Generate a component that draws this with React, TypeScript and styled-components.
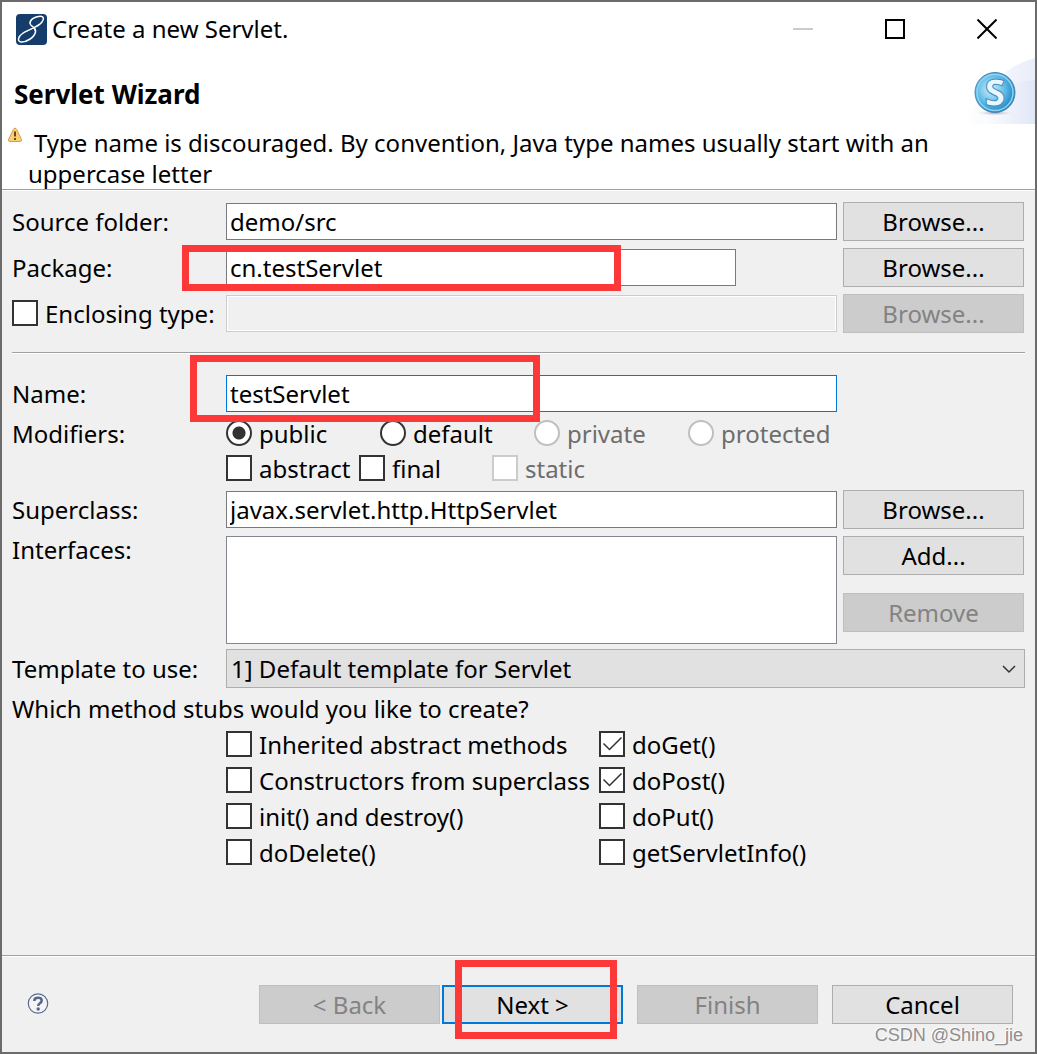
import React, { useState } from "react";
import styled, { createGlobalStyle, css } from "styled-components";

const GlobalStyle = createGlobalStyle`
  *, *::before, *::after { box-sizing: border-box; }
  body { margin: 0; background: #6b6b6b; }
  body, input, button, select, textarea {
    font-family: "Noto Sans", "Open Sans", sans-serif;
    font-size: 24px;
    line-height: 28px;
    color: #000;
  }
`;

const Window = styled.div`
  position: relative;
  display: flex;
  flex-direction: column;
  min-height: 100vh;
  border: 2px solid #6b6b6b;
  background: #f0f0f0;
`;

const TitleBar = styled.header`
  display: flex;
  align-items: center;
  height: 54px;
  padding: 0 2px 0 14px;
  background: #fff;
`;

const WindowTitle = styled.span`
  flex: 1;
  padding-left: 5px;
`;

const CaptionButton = styled.button`
  display: grid;
  place-items: center;
  width: 92px;
  height: 54px;
  padding: 0;
  border: 0;
  background: transparent;
`;

const Banner = styled.section`
  background: #fff;
  border-bottom: 1px solid #a0a0a0;
  box-shadow: 0 1px 0 #fff;
`;

const BannerTop = styled.div`
  display: flex;
  align-items: flex-start;
  justify-content: space-between;
  padding: 2px 0 0 12px;
`;

const Heading = styled.h1`
  margin: 0;
  padding-top: 22px;
  font-size: 26px;
  line-height: 28px;
  font-weight: 700;
`;

const BannerMessage = styled.div`
  display: flex;
  gap: 5px;
  padding: 3px 64px 0 5px;
`;

const Message = styled.p`
  flex: 1;
  margin: 0;
  text-indent: 6px;
  line-height: 31px;
`;

const Form = styled.form`
  display: flex;
  flex-direction: column;
  flex: 1;
`;

const Fields = styled.main`
  flex: 1;
  padding: 12px 10px 0;
`;

const FieldGrid = styled.div`
  display: grid;
  grid-template-columns: 208px minmax(0, 1fr) 182px;
  column-gap: 6px;
  row-gap: 7px;
  align-items: center;
`;

const Divider = styled.hr`
  height: 2px;
  margin: 19px 0 20px;
  border: 0;
  border-top: 1px solid #a0a0a0;
  background: #fff;
`;

const FieldLabel = styled.label<{ $top?: boolean }>`
  white-space: nowrap;
  align-self: ${(p) => (p.$top ? "start" : "center")};
`;

const GroupLabel = styled.span`
  align-self: start;
`;

const Cell = styled.div<{ $wide?: boolean }>`
  position: relative;
  display: flex;
  align-items: center;
  min-height: 39px;
  grid-column: ${(p) => (p.$wide ? "2 / 4" : "2")};
`;

const TextInput = styled.input<{ $active?: boolean; $short?: boolean }>`
  width: ${(p) => (p.$short ? "calc(100% - 101px)" : "100%")};
  height: 37px;
  padding: 0 3px;
  border: 1px solid ${(p) => (p.$active ? "#0078d7" : "#7a7a7a")};
  border-radius: 0;
  background: #fff;
  outline: none;

  &:disabled {
    border-color: #ccc;
    background: #f0f0f0;
    box-shadow: inset 0 0 0 1px #fff;
  }
`;

const ListBox = styled.textarea`
  display: block;
  width: 100%;
  height: 108px;
  padding: 4px;
  border: 1px solid #828790;
  border-radius: 0;
  background: #fff;
  resize: none;
  outline: none;
`;

const Button = styled.button<{ $primary?: boolean }>`
  width: 181px;
  height: 39px;
  padding: 0;
  border: ${(p) => (p.$primary ? "2px solid #0078d7" : "1px solid #adadad")};
  border-radius: 0;
  background: #e1e1e1;

  &:disabled {
    border-color: #bfbfbf;
    background: #ccc;
    color: #838383;
  }
`;

const ButtonStack = styled.div`
  display: flex;
  flex-direction: column;
  gap: 18px;
  align-self: start;
`;

const OptionLabel = styled.label<{ $muted?: boolean }>`
  display: flex;
  align-items: flex-start;
  gap: 7px;
  white-space: nowrap;
  color: ${(p) => (p.$muted ? "#6d6d6d" : "#000")};
`;

const TickFrame = styled.span`
  display: grid;
  flex: none;
  width: 26px;
  height: 26px;

  > * {
    grid-area: 1 / 1;
  }
  svg {
    pointer-events: none;
  }
`;

const control = css`
  appearance: none;
  width: 26px;
  height: 26px;
  margin: 0;
  border: 2px solid #333;
  background: #fff;

  &:disabled {
    border-color: #ccc;
  }
`;

const TickInput = styled.input`
  ${control}
`;

const RadioInput = styled.input`
  ${control}
  flex: none;
  border-radius: 50%;

  &:checked {
    background: radial-gradient(circle, #333 6px, #fff 7px);
  }
  &:disabled {
    border-color: #bfbfbf;
  }
`;

const RadioRow = styled.div`
  display: grid;
  grid-template-columns: repeat(4, 154px);
`;

const TickRow = styled.div`
  display: grid;
  grid-template-columns: 133px 133px auto;
  justify-content: start;
`;

const TemplateGrid = styled(FieldGrid)`
  margin-top: 5px;
`;

const SelectFrame = styled.div`
  position: relative;
  width: 100%;
`;

const Select = styled.select`
  display: block;
  appearance: none;
  width: 100%;
  height: 39px;
  padding: 0 32px 0 4px;
  border: 1px solid #adadad;
  border-radius: 0;
  background: #e1e1e1;
`;

const SelectArrow = styled.svg`
  position: absolute;
  top: 12px;
  right: 8px;
  pointer-events: none;
`;

const StubGroup = styled.fieldset`
  margin: 7px 0 0;
  padding: 0;
  border: 0;
`;

const StubLegend = styled.legend`
  padding: 0;
`;

const StubGrid = styled.div`
  display: grid;
  grid-template-columns: 373px auto;
  justify-content: start;
  gap: 8px 0;
  padding: 8px 0 0 214px;
`;

const Footer = styled.footer`
  display: flex;
  align-items: center;
  padding: 29px 22px 28px 25px;
  border-top: 1px solid #a0a0a0;
  box-shadow: inset 0 1px 0 #fff;
`;

const HelpButton = styled.button`
  display: grid;
  width: 24px;
  height: 24px;
  margin-right: auto;
  padding: 0;
  border: 0;
  background: transparent;
`;

const FooterButtons = styled.div`
  display: flex;
  gap: 14px;
`;

const StepButtons = styled.div`
  display: flex;
  gap: 2px;
`;

const Marked = styled.div`
  position: relative;
  display: flex;
`;

const Highlight = styled.span<{
  $top: number;
  $left: number;
  $width: number;
  $height: number;
}>`
  position: absolute;
  z-index: 1;
  top: ${(p) => p.$top}px;
  left: ${(p) => p.$left}px;
  width: ${(p) => p.$width}px;
  height: ${(p) => p.$height}px;
  border: 7px solid #fc3838;
  pointer-events: none;
`;

const Watermark = styled.span`
  position: absolute;
  right: 12px;
  bottom: 5px;
  font-family: "Liberation Sans", Arial, sans-serif;
  font-size: 18px;
  line-height: 24px;
  color: #8e8e8e;
  text-shadow: -1px -1px 0 #fff;
  pointer-events: none;
`;

const AppIcon = () => (
  <svg width="31" height="31" viewBox="0 0 31 31" aria-hidden="true">
    <rect width="31" height="31" rx="4" fill="#153d6b" />
    <path
      d="M25.500 8.500C28.500 5.500 28 2 24 2.200C18.500 2.500 13.500 6 14 9.500C14.500 13 20.500 13 19.500 18C18.500 23.500 10 28.500 5 28C1 27.500 2 22.500 6.500 19.500C12 15.500 22 13.500 26 8"
      fill="none"
      stroke="#fff"
      strokeWidth="1.500"
      strokeLinecap="round"
    />
  </svg>
);

const WarningIcon = () => (
  <svg width="16" height="16" viewBox="0 0 15 16" aria-hidden="true">
    <path
      d="M7.500 1.200Q8.600 1.200 9.200 2.600L14 12.500Q14.500 14.500 12.800 14.500H2.200Q.5 14.500 1 12.500L5.800 2.600Q6.400 1.200 7.500 1.200Z"
      fill="#fbd071"
      stroke="#d29a55"
    />
    <path d="M7.500 4.500V9.500M7.500 11V13" stroke="#6b4513" strokeWidth="2" />
  </svg>
);

const WizardBadge = () => (
  <svg width="71" height="66" viewBox="0 0 71 66" aria-hidden="true">
    <defs>
      <linearGradient id="haze" x1="0" x2="1" y1="0" y2="0">
        <stop offset="0" stopColor="#fff" />
        <stop offset="1" stopColor="#dbe2f6" />
      </linearGradient>
      <radialGradient id="ball" cx=".4" cy=".42" r=".62">
        <stop offset="0" stopColor="#d3f0fa" />
        <stop offset=".6" stopColor="#58b8e4" />
        <stop offset="1" stopColor="#1b7fc0" />
      </radialGradient>
      <radialGradient id="shade">
        <stop offset="0" stopColor="#a79bab" />
        <stop offset="1" stopColor="#fff" stopOpacity="0" />
      </radialGradient>
    </defs>
    <path d="M0 66Q30 10 71 0V66Z" fill="url(#haze)" opacity=".6" />
    <path d="M18 66Q30 23 71 22V66Z" fill="url(#haze)" opacity=".6" />
    <ellipse cx="31" cy="55" rx="21" ry="3" fill="url(#shade)" />
    <circle cx="31" cy="34.500" r="20" fill="url(#ball)" stroke="#4a86b5" />
    <circle cx="31" cy="34.500" r="18" fill="none" stroke="#8fd4f0" strokeWidth="1.500" />
    <text
      x="31"
      y="48"
      textAnchor="middle"
      fontFamily="Noto Sans, sans-serif"
      fontWeight="800"
      fontSize="37"
      fill="#e9f8fe"
      stroke="#4389bd"
      strokeWidth="1"
    >
      S
    </text>
  </svg>
);

const HelpIcon = () => (
  <svg width="24" height="24" viewBox="0 0 24 24" aria-hidden="true">
    <circle cx="11" cy="10.500" r="9.700" fill="#f4f4f6" stroke="#5b6b8c" strokeWidth="1.200" />
    <path
      d="M7.300 8Q7.300 4.800 11 4.800Q14.700 4.800 14.700 7.500Q14.700 9.100 12.900 10.200Q11.200 11.200 11.200 13"
      fill="none"
      stroke="#56678a"
      strokeWidth="2.500"
    />
    <circle cx="11.200" cy="16" r="1.700" fill="#56678a" />
  </svg>
);

interface TickProps {
  label: string;
  checked?: boolean;
  disabled?: boolean;
}

const Tick = ({ label, checked = false, disabled = false }: TickProps) => {
  const [on, setOn] = useState(checked);
  return (
    <OptionLabel $muted={disabled}>
      <TickFrame>
        <TickInput
          type="checkbox"
          checked={on}
          disabled={disabled}
          onChange={() => setOn(!on)}
        />
        {on && (
          <svg width="26" height="26" viewBox="0 0 26 26" aria-hidden="true">
            <path d="M4.500 12.500L10.500 18.500L22.500 6.500" fill="none" stroke="#333" strokeWidth="1.500" />
          </svg>
        )}
      </TickFrame>
      {label}
    </OptionLabel>
  );
};

const visibilities = [
  { name: "public", disabled: false },
  { name: "default", disabled: false },
  { name: "private", disabled: true },
  { name: "protected", disabled: true },
];

const stubs = [
  { label: "Inherited abstract methods" },
  { label: "doGet()", checked: true },
  { label: "Constructors from superclass" },
  { label: "doPost()", checked: true },
  { label: "init() and destroy()" },
  { label: "doPut()" },
  { label: "doDelete()" },
  { label: "getServletInfo()" },
];

export default function App() {
  const [visibility, setVisibility] = useState("public");

  return (
    <>
      <GlobalStyle />
      <Window>
        <TitleBar>
          <AppIcon />
          <WindowTitle>Create a new Servlet.</WindowTitle>
          <CaptionButton type="button" aria-label="Minimize" disabled>
            <svg width="20" height="20">
              <path d="M0 10H20" stroke="#ccc" strokeWidth="2" />
            </svg>
          </CaptionButton>
          <CaptionButton type="button" aria-label="Maximize">
            <svg width="20" height="20">
              <rect x="1" y="1" width="18" height="18" fill="none" stroke="#000" strokeWidth="2" />
            </svg>
          </CaptionButton>
          <CaptionButton type="button" aria-label="Close">
            <svg width="20" height="20">
              <path d="M.5 .5L19.500 19.500M19.500 .5L.5 19.500" stroke="#000" strokeWidth="2" />
            </svg>
          </CaptionButton>
        </TitleBar>

        <Banner>
          <BannerTop>
            <Heading>Servlet Wizard</Heading>
            <WizardBadge />
          </BannerTop>
          <BannerMessage>
            <WarningIcon />
            <Message>
              Type name is discouraged. By convention, Java type names usually start with an
              uppercase letter
            </Message>
          </BannerMessage>
        </Banner>

        <Form onSubmit={(e) => e.preventDefault()}>
          <Fields>
            <FieldGrid>
              <FieldLabel htmlFor="source">Source folder:</FieldLabel>
              <Cell>
                <TextInput id="source" defaultValue="demo/src" />
              </Cell>
              <Button type="button">Browse...</Button>

              <FieldLabel htmlFor="package">Package:</FieldLabel>
              <Cell>
                <TextInput id="package" defaultValue="cn.testServlet" $short />
                <Highlight $top={-3} $left={-44} $width={439} $height={46} />
              </Cell>
              <Button type="button">Browse...</Button>

              <Tick label="Enclosing type:" />
              <Cell>
                <TextInput aria-label="Enclosing type" disabled />
              </Cell>
              <Button type="button" disabled>
                Browse...
              </Button>
            </FieldGrid>

            <Divider />

            <FieldGrid>
              <FieldLabel htmlFor="name">Name:</FieldLabel>
              <Cell>
                <TextInput id="name" defaultValue="testServlet" $active />
                <Highlight $top={-19} $left={-36} $width={350} $height={67} />
              </Cell>
              <span />

              <GroupLabel>Modifiers:</GroupLabel>
              <RadioRow role="radiogroup" aria-label="Modifiers">
                {visibilities.map((v) => (
                  <OptionLabel key={v.name} $muted={v.disabled}>
                    <RadioInput
                      type="radio"
                      name="visibility"
                      checked={visibility === v.name}
                      disabled={v.disabled}
                      onChange={() => setVisibility(v.name)}
                    />
                    {v.name}
                  </OptionLabel>
                ))}
              </RadioRow>
              <span />

              <span />
              <TickRow>
                <Tick label="abstract" />
                <Tick label="final" />
                <Tick label="static" disabled />
              </TickRow>
              <span />

              <FieldLabel htmlFor="superclass">Superclass:</FieldLabel>
              <Cell>
                <TextInput id="superclass" defaultValue="javax.servlet.http.HttpServlet" />
              </Cell>
              <Button type="button">Browse...</Button>

              <FieldLabel htmlFor="interfaces" $top>
                Interfaces:
              </FieldLabel>
              <ListBox id="interfaces" />
              <ButtonStack>
                <Button type="button">Add...</Button>
                <Button type="button" disabled>
                  Remove
                </Button>
              </ButtonStack>
            </FieldGrid>

            <TemplateGrid>
              <FieldLabel htmlFor="template">Template to use:</FieldLabel>
              <Cell $wide>
                <SelectFrame>
                  <Select id="template">
                    <option>1] Default template for Servlet</option>
                  </Select>
                  <SelectArrow width="16" height="16" aria-hidden="true">
                    <path d="M2 5L8 11L14 5" fill="none" stroke="#333" strokeWidth="1.500" />
                  </SelectArrow>
                </SelectFrame>
              </Cell>
            </TemplateGrid>

            <StubGroup>
              <StubLegend>Which method stubs would you like to create?</StubLegend>
              <StubGrid>
                {stubs.map((s) => (
                  <Tick key={s.label} label={s.label} checked={s.checked} />
                ))}
              </StubGrid>
            </StubGroup>
          </Fields>

          <Footer>
            <HelpButton type="button" aria-label="Help">
              <HelpIcon />
            </HelpButton>
            <FooterButtons>
              <StepButtons>
                <Button type="button" disabled>
                  &lt; Back
                </Button>
                <Marked>
                  <Button type="submit" $primary>
                    Next &gt;
                  </Button>
                  <Highlight $top={-25} $left={13} $width={162} $height={79} />
                </Marked>
              </StepButtons>
              <Button type="button" disabled>
                Finish
              </Button>
              <Button type="button">Cancel</Button>
            </FooterButtons>
          </Footer>
        </Form>
        <Watermark>CSDN @Shino_jie</Watermark>
      </Window>
    </>
  );
}
